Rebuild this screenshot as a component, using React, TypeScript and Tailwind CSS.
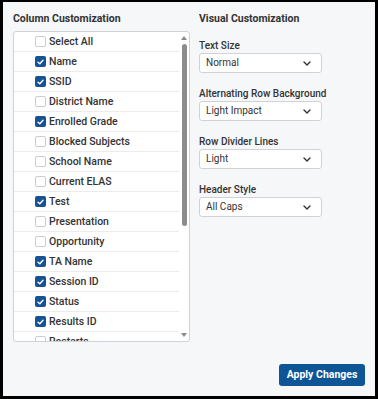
import React, { useState } from 'react';

const columns = [
  { label: 'Select All', checked: false },
  { label: 'Name', checked: true },
  { label: 'SSID', checked: true },
  { label: 'District Name', checked: false },
  { label: 'Enrolled Grade', checked: true },
  { label: 'Blocked Subjects', checked: false },
  { label: 'School Name', checked: false },
  { label: 'Current ELAS', checked: false },
  { label: 'Test', checked: true },
  { label: 'Presentation', checked: false },
  { label: 'Opportunity', checked: false },
  { label: 'TA Name', checked: true },
  { label: 'Session ID', checked: true },
  { label: 'Status', checked: true },
  { label: 'Results ID', checked: true },
  { label: 'Restarts', checked: false },
];

const selects = [
  { label: 'Text Size', value: 'Normal' },
  { label: 'Alternating Row Background', value: 'Light Impact' },
  { label: 'Row Divider Lines', value: 'Light' },
  { label: 'Header Style', value: 'All Caps' },
];

const Check: React.FC<{ checked: boolean }> = ({ checked }) =>
  checked ? (
    <span className="flex h-[11px] w-[11px] shrink-0 items-center justify-center rounded-[2px] bg-[#155396]">
      <svg width="7" height="6" viewBox="0 0 7 6" fill="none">
        <path d="M1 3.2 L2.8 4.8 L6 1.2" stroke="white" strokeWidth="1.4" strokeLinecap="round" strokeLinejoin="round" />
      </svg>
    </span>
  ) : (
    <span className="h-[11px] w-[11px] shrink-0 rounded-[2px] border border-[#c9ccd0] bg-white" />
  );

const App: React.FC = () => {
  const [items] = useState(columns);

  return (
    <div className="h-[399px] w-[378px] bg-black pl-[3px] pr-[3px] pt-[2px] pb-[3px] font-['Roboto',sans-serif]">
      <div className="flex h-full flex-col bg-[#f6f7f9] px-[10px] pt-[10px] pb-[10px] text-[#333]">
        <div className="flex gap-[9px]">
          {/* Column list */}
          <div className="w-[177px]">
            <h3 className="mb-[6px] text-[10.5px] font-bold leading-[13px]">Column Customization</h3>
            <div className="flex h-[311px] overflow-hidden rounded-[3px] border border-[#cfd3d8] bg-white">
              <div className="flex-1 overflow-hidden">
                {items.map((c) => (
                  <div key={c.label} className="flex h-[20px] items-center gap-[3px] border-b border-[#ececec] pl-[21px]">
                    <Check checked={c.checked} />
                    <span className="whitespace-nowrap text-[10.5px] font-medium leading-[12px] text-[#333]">{c.label}</span>
                  </div>
                ))}
              </div>
              <div className="flex w-[10px] flex-col items-center pt-[3px] pb-[3px]">
                <svg width="6" height="4" viewBox="0 0 6 4" className="mt-[1px]">
                  <path d="M3 0 L6 4 L0 4 Z" fill="#8a8a8a" />
                </svg>
                <div className="mt-[4px] h-[182px] w-[5px] rounded-full bg-[#8c8c8c]" />
                <div className="flex-1" />
                <svg width="6" height="4" viewBox="0 0 6 4" className="mb-[1px]">
                  <path d="M0 0 L6 0 L3 4 Z" fill="#8a8a8a" />
                </svg>
              </div>
            </div>
          </div>

          {/* Visual options */}
          <div className="w-[160px]">
            <h3 className="mb-[14px] text-[10.5px] font-bold leading-[13px]">Visual Customization</h3>
            <div className="flex flex-col gap-[14px]">
              {selects.map((s) => (
                <div key={s.label}>
                  <div className="mb-[1px] whitespace-nowrap text-[10px] font-medium leading-[13px]">{s.label}</div>
                  <div className="flex h-[20px] w-[123px] items-center justify-between rounded-[3px] border border-[#cfd3d8] bg-white pl-[6px] pr-[10px]">
                    <span className="text-[10px] leading-none text-[#333]">{s.value}</span>
                    <svg width="8" height="5" viewBox="0 0 8 5" fill="none">
                      <path d="M1 1 L4 4 L7 1" stroke="#333" strokeWidth="1.4" strokeLinecap="round" strokeLinejoin="round" />
                    </svg>
                  </div>
                </div>
              ))}
            </div>
          </div>
        </div>

        <div className="mt-auto flex justify-end">
          <button className="h-[22px] w-[86px] rounded-[3px] bg-[#0e5596] text-[10.5px] font-bold text-white">
            Apply Changes
          </button>
        </div>
      </div>
    </div>
  );
};

export default App;
